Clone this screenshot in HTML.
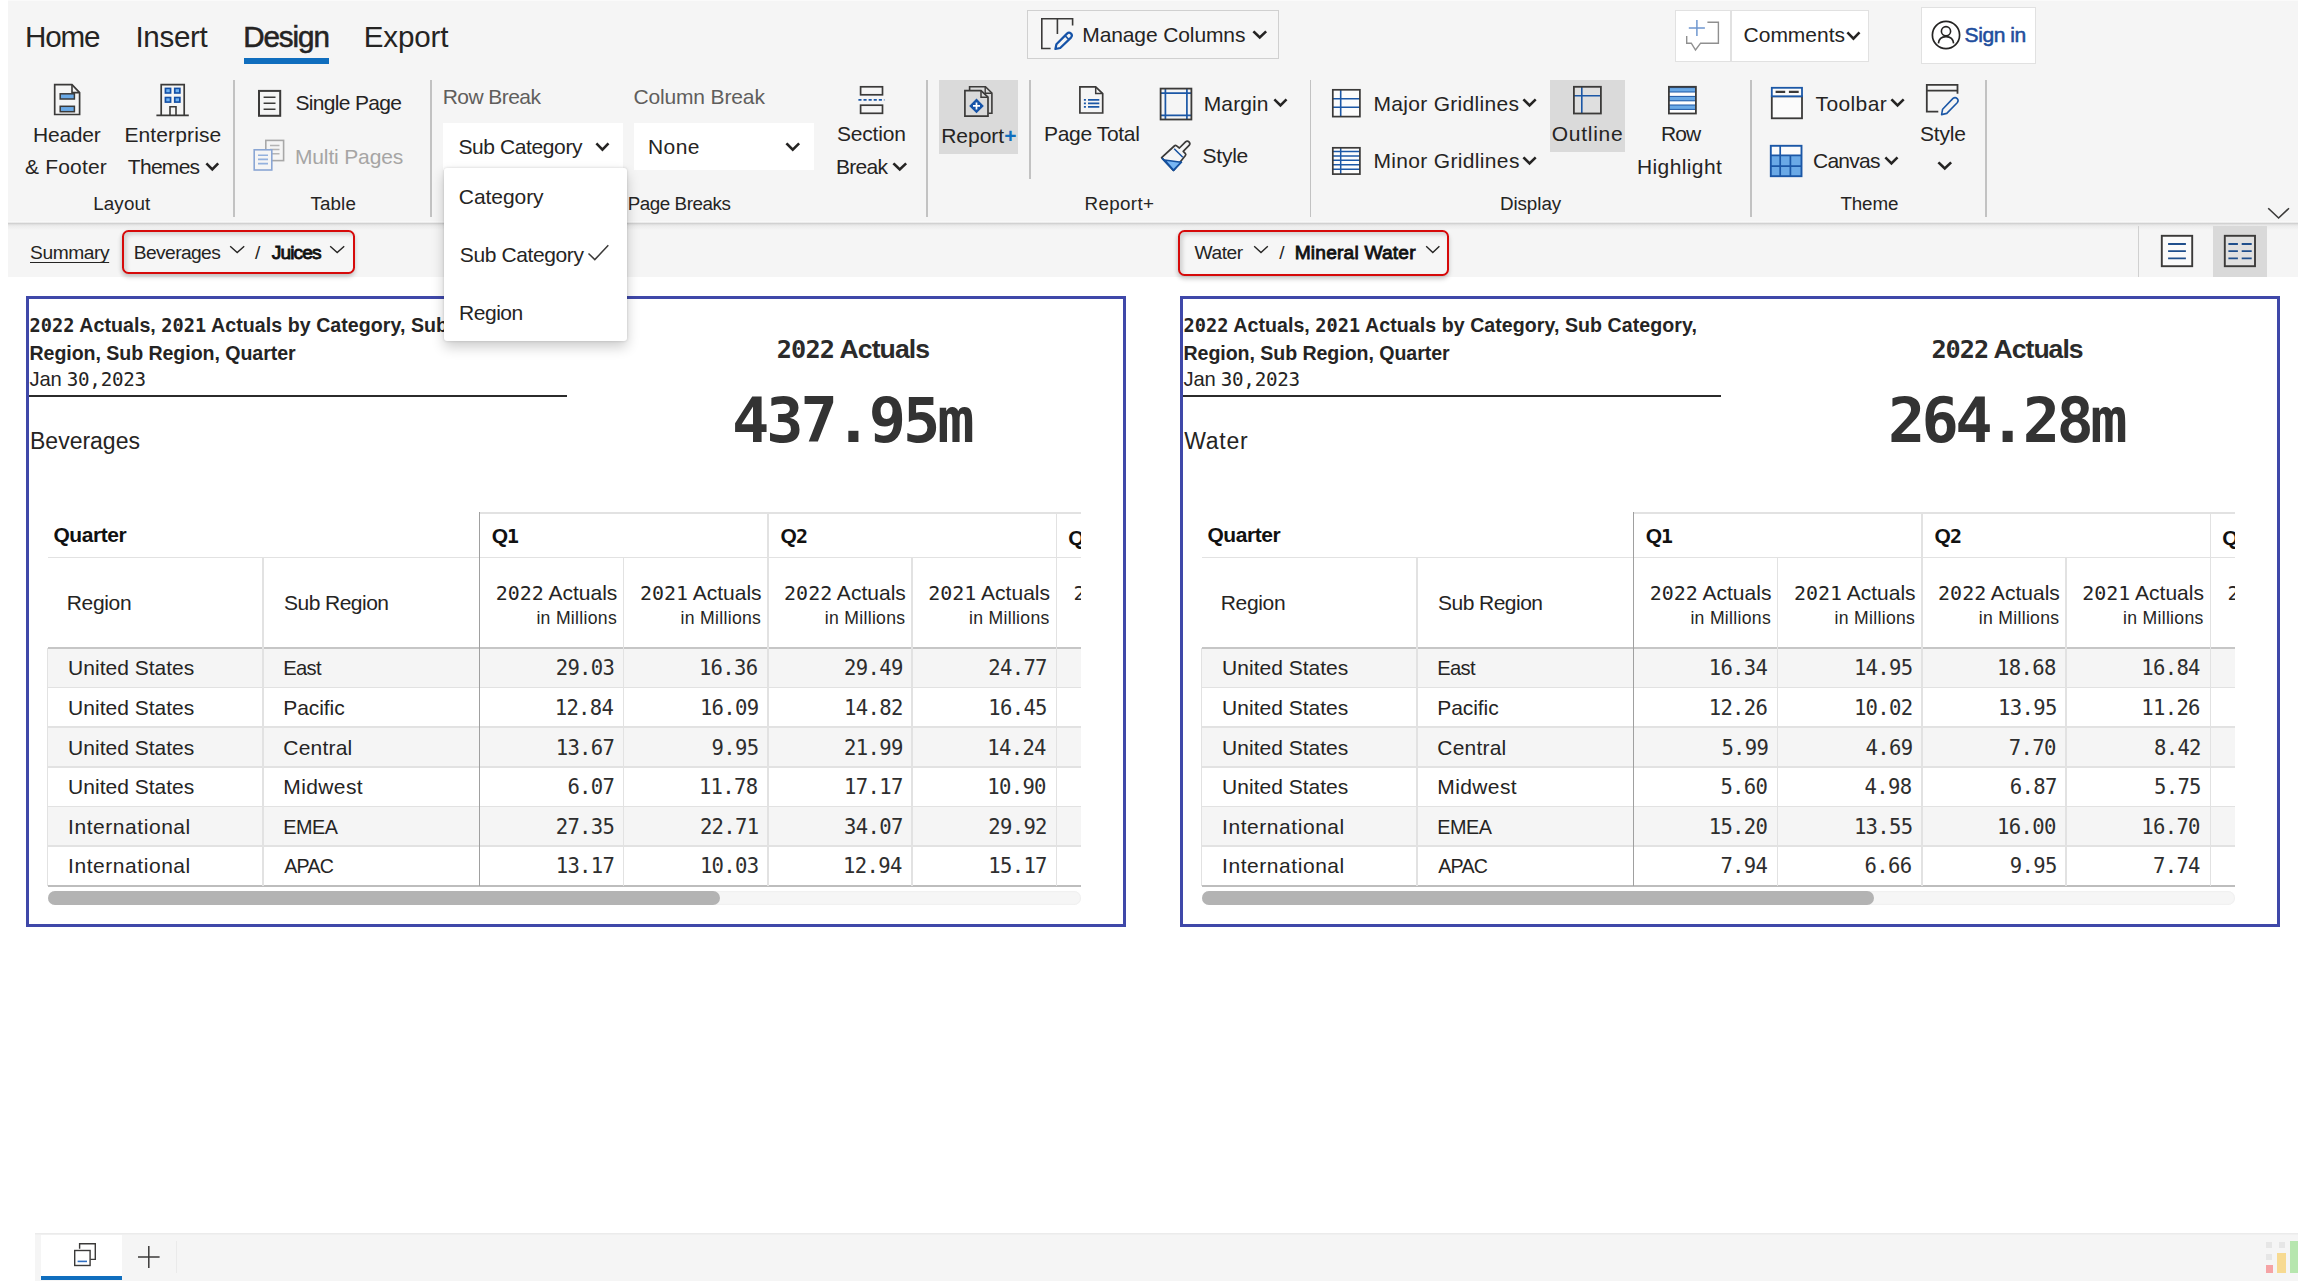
<!DOCTYPE html>
<html lang="en">
<head>
<meta charset="utf-8">
<title>Report</title>
<style>
html,body{margin:0;padding:0;background:#fff;}
body{position:relative;width:2304px;height:1288px;overflow:hidden;font-family:"Liberation Sans",sans-serif;color:#252423;}
body>div,body>svg{position:absolute;}
.t{white-space:nowrap;line-height:1.2;}
.m{font-family:"DejaVu Sans Mono","Liberation Mono",monospace;font-size:.95em;}
.mm{font-family:"DejaVu Sans Mono","Liberation Mono",monospace;}
svg{overflow:visible;}
</style>
</head>
<body>
<div style="left:8px;top:0px;width:2290px;height:277px;background:#f5f5f5;"></div>
<div style="left:8px;top:0px;width:2290px;height:1px;background:#fafafa;"></div>
<div style="left:8px;top:220.8px;width:2290px;height:9px;background:linear-gradient(#f5f5f5 0%,#f9f9f9 8%,#e6e6e6 20%,#cecece 29%,#e2e2e2 40%,#ececec 55%,#f5f5f5 100%);"></div>
<div style="left:233.2px;top:80px;width:1.6px;height:137px;background:#c2c2c2;"></div>
<div style="left:430.2px;top:80px;width:1.6px;height:137px;background:#c2c2c2;"></div>
<div style="left:926.2px;top:80px;width:1.6px;height:137px;background:#c2c2c2;"></div>
<div style="left:1309.7px;top:80px;width:1.6px;height:137px;background:#c2c2c2;"></div>
<div style="left:1750.2px;top:80px;width:1.6px;height:137px;background:#c2c2c2;"></div>
<div style="left:1985.2px;top:80px;width:1.6px;height:137px;background:#c2c2c2;"></div>
<div style="left:1029.2px;top:80px;width:1.6px;height:99px;background:#c2c2c2;"></div>
<div style="left:244px;top:58px;width:85px;height:5.5px;background:#106ebe;"></div>
<svg style="left:205.6px;top:162.5px" width="12.6" height="7.8" viewBox="0 0 12.6 7.8"><path d="M1.3 1.3L6.3 6.5L11.3 1.3" fill="none" stroke="#252423" stroke-width="2.6" stroke-linecap="square" stroke-linejoin="miter"/></svg>
<div style="left:442.6px;top:123px;width:180.4px;height:46.5px;background:#fff;"></div>
<div style="left:633.8px;top:123px;width:180.5px;height:46.5px;background:#fff;"></div>
<svg style="left:595.6px;top:142.7px" width="12.9" height="7.9" viewBox="0 0 12.9 7.9"><path d="M1.3 1.3L6.45 6.6L11.6 1.3" fill="none" stroke="#252423" stroke-width="2.6" stroke-linecap="square" stroke-linejoin="miter"/></svg>
<svg style="left:785.7px;top:142.7px" width="13.5" height="7.9" viewBox="0 0 13.5 7.9"><path d="M1.3 1.3L6.75 6.6L12.2 1.3" fill="none" stroke="#252423" stroke-width="2.6" stroke-linecap="square" stroke-linejoin="miter"/></svg>
<svg style="left:892.9px;top:162.5px" width="13.5" height="7.8" viewBox="0 0 13.5 7.8"><path d="M1.3 1.3L6.75 6.5L12.2 1.3" fill="none" stroke="#252423" stroke-width="2.6" stroke-linecap="square" stroke-linejoin="miter"/></svg>
<div style="left:938.8px;top:80px;width:79.2px;height:73.5px;background:#dadada;"></div>
<svg style="left:1273.5px;top:99.3px" width="12.9" height="7.7" viewBox="0 0 12.9 7.7"><path d="M1.3 1.3L6.45 6.4L11.6 1.3" fill="none" stroke="#252423" stroke-width="2.6" stroke-linecap="square" stroke-linejoin="miter"/></svg>
<svg style="left:1523.4px;top:99.3px" width="13.1" height="7.7" viewBox="0 0 13.1 7.7"><path d="M1.3 1.3L6.55 6.4L11.8 1.3" fill="none" stroke="#252423" stroke-width="2.6" stroke-linecap="square" stroke-linejoin="miter"/></svg>
<svg style="left:1523.4px;top:156.9px" width="13.1" height="7.7" viewBox="0 0 13.1 7.7"><path d="M1.3 1.3L6.55 6.4L11.8 1.3" fill="none" stroke="#252423" stroke-width="2.6" stroke-linecap="square" stroke-linejoin="miter"/></svg>
<div style="left:1549.9px;top:80px;width:75.1px;height:71.7px;background:#dadada;"></div>
<svg style="left:1891.2px;top:99.3px" width="13.1" height="7.7" viewBox="0 0 13.1 7.7"><path d="M1.3 1.3L6.55 6.4L11.8 1.3" fill="none" stroke="#252423" stroke-width="2.6" stroke-linecap="square" stroke-linejoin="miter"/></svg>
<svg style="left:1885.1px;top:156.9px" width="12.9" height="7.7" viewBox="0 0 12.9 7.7"><path d="M1.3 1.3L6.45 6.4L11.6 1.3" fill="none" stroke="#252423" stroke-width="2.6" stroke-linecap="square" stroke-linejoin="miter"/></svg>
<svg style="left:1937.5px;top:162px" width="13.5" height="7.7" viewBox="0 0 13.5 7.7"><path d="M1.3 1.3L6.75 6.4L12.2 1.3" fill="none" stroke="#252423" stroke-width="2.6" stroke-linecap="square" stroke-linejoin="miter"/></svg>
<svg style="left:2267.7px;top:207.7px" width="21.2" height="10.8" viewBox="0 0 21.2 10.8"><path d="M0.8 0.8L10.6 10L20.4 0.8" fill="none" stroke="#3b3a39" stroke-width="1.6" stroke-linecap="square" stroke-linejoin="miter"/></svg>
<div style="left:1027px;top:10.2px;width:251.5px;height:49px;box-sizing:border-box;border:1.4px solid #d0d0d0;background:#f6f6f6;"></div>
<svg style="left:1253.3px;top:30.5px" width="13.5" height="7.8" viewBox="0 0 13.5 7.8"><path d="M1.3 1.3L6.75 6.5L12.2 1.3" fill="none" stroke="#252423" stroke-width="2.6" stroke-linecap="square" stroke-linejoin="miter"/></svg>
<div style="left:1675px;top:9.5px;width:194.3px;height:52px;box-sizing:border-box;border:1.5px solid #e1e1e1;background:#fff;"></div>
<div style="left:1730px;top:10px;width:1.5px;height:51px;background:#e1e1e1;"></div>
<svg style="left:1846.7px;top:31.6px" width="12.9" height="7.9" viewBox="0 0 12.9 7.9"><path d="M1.3 1.3L6.45 6.6L11.6 1.3" fill="none" stroke="#252423" stroke-width="2.6" stroke-linecap="square" stroke-linejoin="miter"/></svg>
<div style="left:1921px;top:7.2px;width:115.3px;height:57.1px;box-sizing:border-box;border:1.5px solid #e1e1e1;background:#fff;"></div>
<div style="left:122.3px;top:229.9px;width:233px;height:44.2px;box-sizing:border-box;border:2.5px solid #d60a0a;border-radius:6.5px;background:#f6f6f6;box-shadow:inset 2.5px 2.5px 4px rgba(0,0,0,.16),0 3px 5px rgba(0,0,0,.16),-1px 2px 4px rgba(0,0,0,.08);"></div>
<svg style="left:229.6px;top:246px" width="14.4" height="7.3" viewBox="0 0 14.4 7.3"><path d="M0.7 0.7L7.2 6.6L13.7 0.7" fill="none" stroke="#252423" stroke-width="1.4" stroke-linecap="square" stroke-linejoin="miter"/></svg>
<svg style="left:330.4px;top:246px" width="14.4" height="7.3" viewBox="0 0 14.4 7.3"><path d="M0.7 0.7L7.2 6.6L13.7 0.7" fill="none" stroke="#252423" stroke-width="1.4" stroke-linecap="square" stroke-linejoin="miter"/></svg>
<div style="left:1178.2px;top:229.9px;width:270.7px;height:46.4px;box-sizing:border-box;border:2.5px solid #d60a0a;border-radius:6.5px;background:#f6f6f6;box-shadow:inset 2.5px 2.5px 4px rgba(0,0,0,.16),0 3px 5px rgba(0,0,0,.16),-1px 2px 4px rgba(0,0,0,.08);"></div>
<svg style="left:1254px;top:246px" width="14" height="7.3" viewBox="0 0 14 7.3"><path d="M0.7 0.7L7 6.6L13.3 0.7" fill="none" stroke="#252423" stroke-width="1.4" stroke-linecap="square" stroke-linejoin="miter"/></svg>
<svg style="left:1426.4px;top:246px" width="13.6" height="7.3" viewBox="0 0 13.6 7.3"><path d="M0.7 0.7L6.8 6.6L12.9 0.7" fill="none" stroke="#252423" stroke-width="1.4" stroke-linecap="square" stroke-linejoin="miter"/></svg>
<div style="left:2137.8px;top:225.7px;width:1.3px;height:51.5px;background:#d0d0d0;"></div>
<div style="left:2213.3px;top:225.7px;width:54.2px;height:51.5px;background:#d9d9d9;"></div>
<div style="left:26px;top:296px;width:1100px;height:630.5px;box-sizing:border-box;border:3.4px solid #3f48a9;background:#fff;"></div>
<div style="left:29.4px;top:394.8px;width:537.6px;height:1.8px;background:#2b2b2b;"></div>
<div style="left:47.5px;top:648px;width:1033.5px;height:39.6px;background:#f5f5f5;"></div>
<div style="left:47.5px;top:727.2px;width:1033.5px;height:39.6px;background:#f5f5f5;"></div>
<div style="left:47.5px;top:806.4px;width:1033.5px;height:39.6px;background:#f5f5f5;"></div>
<div style="left:479.4px;top:512px;width:601.6px;height:1.5px;background:#e2e2e2;"></div>
<div style="left:47.5px;top:556.6px;width:1033.5px;height:1.6px;background:#e2e2e2;"></div>
<div style="left:47.5px;top:646.8px;width:1033.5px;height:2.2px;background:#c6c6c6;"></div>
<div style="left:47.5px;top:686.8px;width:1033.5px;height:1.6px;background:#e2e2e2;"></div>
<div style="left:47.5px;top:726.4px;width:1033.5px;height:1.6px;background:#e2e2e2;"></div>
<div style="left:47.5px;top:766px;width:1033.5px;height:1.6px;background:#e2e2e2;"></div>
<div style="left:47.5px;top:805.6px;width:1033.5px;height:1.6px;background:#e2e2e2;"></div>
<div style="left:47.5px;top:845.2px;width:1033.5px;height:1.6px;background:#e2e2e2;"></div>
<div style="left:47.5px;top:884.6px;width:1033.5px;height:2px;background:#bdbdbd;"></div>
<div style="left:46.9px;top:648px;width:1.4px;height:237.5px;background:#e2e2e2;"></div>
<div style="left:262.3px;top:557px;width:1.5px;height:328.5px;background:#e2e2e2;"></div>
<div style="left:478.5px;top:512px;width:1.8px;height:373.5px;background:#a0a0a0;"></div>
<div style="left:622.9px;top:557px;width:1.5px;height:328.5px;background:#e2e2e2;"></div>
<div style="left:911.3px;top:557px;width:1.5px;height:328.5px;background:#e2e2e2;"></div>
<div style="left:767.1px;top:512px;width:1.5px;height:373.5px;background:#e2e2e2;"></div>
<div style="left:1055.5px;top:512px;width:1.5px;height:373.5px;background:#e2e2e2;"></div>
<div style="left:1060px;top:515px;width:21px;height:130px;overflow:hidden;"><div class="t" style="position:absolute;left:8.3px;top:9.5px;font-size:21px;font-weight:bold;color:#111;">Q<span class="m">3</span></div><div class="t mm" style="position:absolute;left:13.5px;top:65.6px;font-size:20px;letter-spacing:-0.7px;">2022</div></div>
<div style="left:47.5px;top:890.5px;width:1033.5px;height:14.3px;background:#f6f6f6;border-radius:7px;box-shadow:inset 0 0 2px rgba(0,0,0,.08);"></div>
<div style="left:47.5px;top:890.5px;width:672.5px;height:14.3px;background:#b3b3b3;border-radius:7px;"></div>
<div style="left:1180px;top:296px;width:1100px;height:630.5px;box-sizing:border-box;border:3.4px solid #3f48a9;background:#fff;"></div>
<div style="left:1183.4px;top:394.8px;width:537.6px;height:1.8px;background:#2b2b2b;"></div>
<div style="left:1201.5px;top:648px;width:1033.5px;height:39.6px;background:#f5f5f5;"></div>
<div style="left:1201.5px;top:727.2px;width:1033.5px;height:39.6px;background:#f5f5f5;"></div>
<div style="left:1201.5px;top:806.4px;width:1033.5px;height:39.6px;background:#f5f5f5;"></div>
<div style="left:1633.4px;top:512px;width:601.6px;height:1.5px;background:#e2e2e2;"></div>
<div style="left:1201.5px;top:556.6px;width:1033.5px;height:1.6px;background:#e2e2e2;"></div>
<div style="left:1201.5px;top:646.8px;width:1033.5px;height:2.2px;background:#c6c6c6;"></div>
<div style="left:1201.5px;top:686.8px;width:1033.5px;height:1.6px;background:#e2e2e2;"></div>
<div style="left:1201.5px;top:726.4px;width:1033.5px;height:1.6px;background:#e2e2e2;"></div>
<div style="left:1201.5px;top:766px;width:1033.5px;height:1.6px;background:#e2e2e2;"></div>
<div style="left:1201.5px;top:805.6px;width:1033.5px;height:1.6px;background:#e2e2e2;"></div>
<div style="left:1201.5px;top:845.2px;width:1033.5px;height:1.6px;background:#e2e2e2;"></div>
<div style="left:1201.5px;top:884.6px;width:1033.5px;height:2px;background:#bdbdbd;"></div>
<div style="left:1200.9px;top:648px;width:1.4px;height:237.5px;background:#e2e2e2;"></div>
<div style="left:1416.3px;top:557px;width:1.5px;height:328.5px;background:#e2e2e2;"></div>
<div style="left:1632.5px;top:512px;width:1.8px;height:373.5px;background:#a0a0a0;"></div>
<div style="left:1776.9px;top:557px;width:1.5px;height:328.5px;background:#e2e2e2;"></div>
<div style="left:2065.3px;top:557px;width:1.5px;height:328.5px;background:#e2e2e2;"></div>
<div style="left:1921.1px;top:512px;width:1.5px;height:373.5px;background:#e2e2e2;"></div>
<div style="left:2209.5px;top:512px;width:1.5px;height:373.5px;background:#e2e2e2;"></div>
<div style="left:2214px;top:515px;width:21px;height:130px;overflow:hidden;"><div class="t" style="position:absolute;left:8.3px;top:9.5px;font-size:21px;font-weight:bold;color:#111;">Q<span class="m">3</span></div><div class="t mm" style="position:absolute;left:13.5px;top:65.6px;font-size:20px;letter-spacing:-0.7px;">2022</div></div>
<div style="left:1201.5px;top:890.5px;width:1033.5px;height:14.3px;background:#f6f6f6;border-radius:7px;box-shadow:inset 0 0 2px rgba(0,0,0,.08);"></div>
<div style="left:1201.5px;top:890.5px;width:672.5px;height:14.3px;background:#b3b3b3;border-radius:7px;"></div>
<div style="left:34.7px;top:1233.3px;width:2263.3px;height:47.4px;background:#f5f5f5;box-shadow:inset 0 1.5px 0 #ebebeb;"></div>
<div style="left:40.8px;top:1234.7px;width:81.6px;height:41.7px;background:#fff;"></div>
<div style="left:40.8px;top:1276.4px;width:81.6px;height:3.6px;background:#106ebe;"></div>
<div style="left:175.8px;top:1241px;width:1px;height:32px;background:#eaeaea;"></div>
<svg style="left:138.4px;top:1245.7px" width="21.6" height="22" viewBox="0 0 21.6 22"><path d="M10.8 0V22M0 11H21.6" stroke="#3b3a39" stroke-width="1.5" fill="none"/></svg>
<svg style="left:73.8px;top:1242.5px" width="22" height="23.2" viewBox="0 0 22 23.2"><path d="M5.6 5.8V0.7H21.3V16.4H16.2" fill="none" stroke="#3b3a39" stroke-width="1.4"/><rect x="0.7" y="7.5" width="15.4" height="15" fill="#fff" stroke="#3b3a39" stroke-width="1.4"/><path d="M3.6 18.4H13" stroke="#2f6fc2" stroke-width="1.6"/></svg>
<div style="left:2265.5px;top:1265.3px;width:7.8px;height:7.6px;background:#f5a3a5;"></div>
<div style="left:2277.4px;top:1253.1px;width:8.2px;height:19.8px;background:#f7da91;"></div>
<div style="left:2289.8px;top:1241px;width:8.2px;height:31.9px;background:#b6e6ae;"></div>
<div style="left:2266.3px;top:1242px;width:6.1px;height:6px;background:#e6e6e6;"></div>
<div style="left:2278.5px;top:1242px;width:6.1px;height:6px;background:#e6e6e6;"></div>
<div style="left:2266.3px;top:1254px;width:6.1px;height:6px;background:#e6e6e6;"></div>
<svg style="left:52.6px;top:83.2px" width="29" height="34" viewBox="0 0 29 34"><path d="M1.7 1.7H19L26.6 9.6V31.5H1.7Z" fill="#f5f5f5" stroke="#3b3a39" stroke-width="1.7"/><path d="M19 1.7V9.6H26.6" fill="none" stroke="#3b3a39" stroke-width="1.6"/><rect x="7.2" y="10.8" width="14.2" height="5.2" fill="#6aa9e6" stroke="#3b3a39" stroke-width="1.5"/><rect x="7.2" y="23.3" width="14.2" height="5.4" fill="#6aa9e6" stroke="#3b3a39" stroke-width="1.5"/></svg>
<svg style="left:156.4px;top:83.2px" width="34" height="34" viewBox="0 0 34 34"><path d="M5.2 32.3V1.7H28.2V32.3" fill="#f5f5f5" stroke="#3b3a39" stroke-width="1.7"/><path d="M0.4 32.3H32.8" stroke="#3b3a39" stroke-width="1.7"/><path d="M14 32.3V23.8H20V32.3" fill="none" stroke="#3b3a39" stroke-width="1.6"/><rect x="8.6" y="4.6" width="6.8" height="6.2" fill="#134fa5"/><rect x="10.299999999999999" y="6.199999999999999" width="3.4" height="3" fill="#6fb2f2"/><rect x="17.9" y="4.6" width="6.8" height="6.2" fill="#134fa5"/><rect x="19.599999999999998" y="6.199999999999999" width="3.4" height="3" fill="#6fb2f2"/><rect x="8.6" y="13.7" width="6.8" height="6.2" fill="#134fa5"/><rect x="10.299999999999999" y="15.299999999999999" width="3.4" height="3" fill="#6fb2f2"/><rect x="17.9" y="13.7" width="6.8" height="6.2" fill="#134fa5"/><rect x="19.599999999999998" y="15.299999999999999" width="3.4" height="3" fill="#6fb2f2"/></svg>
<svg style="left:257.4px;top:89.2px" width="26" height="29" viewBox="0 0 26 29"><rect x="2" y="1.9" width="21.2" height="24.9" fill="#f5f5f5" stroke="#3b3a39" stroke-width="2"/><path d="M6.6 8.2H18.5M6.6 14.2H18.5M6.6 20.3H18.5" stroke="#3b3a39" stroke-width="1.6"/></svg>
<svg style="left:253px;top:139.4px" width="33" height="33" viewBox="0 0 33 33"><rect x="12.8" y="1.4" width="17.8" height="20.2" fill="#f5f5f5" stroke="#a8a8a8" stroke-width="1.6"/><path d="M17 6.5H26.5M17 10.6H26.5M17 14.8H26.5" stroke="#b4b4b4" stroke-width="1.5"/><rect x="1.2" y="10.8" width="17.6" height="20.2" fill="#f5f5f5" stroke="#8aa6d4" stroke-width="1.6"/><path d="M5 16.2H15M5 20.4H15M5 24.6H15" stroke="#93b1de" stroke-width="1.6"/></svg>
<svg style="left:857.6px;top:85px" width="27" height="30" viewBox="0 0 27 30"><rect x="2.6" y="1.8" width="21.9" height="8" fill="#f5f5f5" stroke="#3b3a39" stroke-width="1.7"/><path d="M0.4 14.9H26.4" stroke="#1b57a6" stroke-width="1.6" stroke-dasharray="3.1 2"/><rect x="2.6" y="20.2" width="21.9" height="8.1" fill="#f5f5f5" stroke="#3b3a39" stroke-width="1.7"/></svg>
<svg style="left:963px;top:85px" width="31" height="33" viewBox="0 0 31 33"><path d="M6.6 5.2V1.7H22.5L28.9 8V28.2H25.4" fill="none" stroke="#3b3a39" stroke-width="1.6"/><path d="M22.2 1.9V8.3H28.8" fill="none" stroke="#3b3a39" stroke-width="1.4"/><path d="M1.9 5.6H18L25 12.2V31.1H1.9Z" fill="#dadada" stroke="#3b3a39" stroke-width="1.7"/><path d="M18 5.8V12.2H24.8" fill="none" stroke="#3b3a39" stroke-width="1.5"/><path d="M13.5 13.6L20.8 20.9L13.5 28.2L6.2 20.9Z" fill="#1553a8"/><path d="M13.5 17.4V24.4M10 20.9H17" stroke="#fff" stroke-width="1.7"/></svg>
<svg style="left:1078.4px;top:85px" width="27" height="30" viewBox="0 0 27 30"><path d="M1.9 1.8H17.7L24.7 8.6V28H1.9Z" fill="#f5f5f5" stroke="#3b3a39" stroke-width="1.7"/><path d="M17.7 1.9V8.6H24.6" fill="none" stroke="#3b3a39" stroke-width="1.5"/><path d="M10 14.9H21.3M10 18.4H21.3M10 21.8H21.3" stroke="#1b57a6" stroke-width="1.7"/><path d="M5.9 14.9H7.9M5.9 18.4H7.9M5.9 21.8H7.9" stroke="#1b57a6" stroke-width="1.7"/></svg>
<svg style="left:1159.4px;top:86.5px" width="34" height="34" viewBox="0 0 34 34"><path d="M6.4 1.6V32.7M27.9 1.6V32.7M1.6 6.2H32.4M1.6 28.4H32.4" stroke="#1b57a6" stroke-width="1.7" fill="none"/><rect x="1.6" y="1.6" width="30.8" height="30.9" fill="none" stroke="#3b3a39" stroke-width="1.8"/></svg>
<svg style="left:1160px;top:140px" width="33" height="32" viewBox="0 0 33 32"><path d="M1.6 17.7L14.3 6Q15.4 5 16.6 5.9L19.4 8L25.5 1.8A2.55 2.55 0 0 1 29.1 5.4L23.2 11.4L25.2 13.3Q26.3 14.3 25.4 15.5L13.5 30.4Z" fill="#f5f5f5" stroke="#3b3a39" stroke-width="1.7" stroke-linejoin="round"/><path d="M2 18.2L13.5 30.3L21.8 21.6" fill="none" stroke="#14509f" stroke-width="1.8" stroke-linejoin="round"/><path d="M4.6 20L21 22.3L13.5 30Z" fill="#78b6f4" stroke="#14509f" stroke-width="1.5" stroke-linejoin="round"/><path d="M14.2 8.8L22.8 17.3" stroke="#14509f" stroke-width="1.5"/></svg>
<svg style="left:1331.2px;top:88.4px" width="31" height="31" viewBox="0 0 31 31"><rect x="1.8" y="1.8" width="27.1" height="26.8" fill="#fcfcfc"/><path d="M9.7 1.8V28.6M1.8 10.7H28.9M1.8 19.2H28.9" stroke="#1b57a6" stroke-width="1.6"/><rect x="1.8" y="1.8" width="27.1" height="26.8" fill="none" stroke="#3b3a39" stroke-width="1.7"/></svg>
<svg style="left:1331.2px;top:146.4px" width="31" height="31" viewBox="0 0 31 31"><rect x="1.8" y="1.8" width="27.1" height="26.3" fill="#fcfcfc"/><path d="M9.7 1.8V28M1.8 5.4H28.9M1.8 9.9H28.9M1.8 14.3H28.9M1.8 18.8H28.9M1.8 23.3H28.9" stroke="#1b57a6" stroke-width="1.5"/><rect x="1.8" y="1.8" width="27.1" height="26.3" fill="none" stroke="#3b3a39" stroke-width="1.7"/></svg>
<svg style="left:1572px;top:84.7px" width="31" height="31" viewBox="0 0 31 31"><rect x="1.9" y="1.8" width="27" height="26.7" fill="#dfdfdf"/><path d="M9.8 1.8V28.5M1.9 10.7H28.9" stroke="#1b57a6" stroke-width="1.6"/><rect x="1.9" y="1.8" width="27" height="26.7" fill="none" stroke="#3b3a39" stroke-width="1.8"/></svg>
<svg style="left:1666.5px;top:84.7px" width="31" height="31" viewBox="0 0 31 31"><rect x="1.9" y="1.8" width="27" height="26.7" fill="#fff"/><rect x="1.9" y="2.6" width="27" height="4.4" fill="#6aa9e6"/><path d="M1.9 2.6H28.9M1.9 7.0H28.9" stroke="#1b57a6" stroke-width="1"/><rect x="1.9" y="11.4" width="27" height="4.4" fill="#6aa9e6"/><path d="M1.9 11.4H28.9M1.9 15.8H28.9" stroke="#1b57a6" stroke-width="1"/><rect x="1.9" y="20" width="27" height="4.4" fill="#6aa9e6"/><path d="M1.9 20H28.9M1.9 24.4H28.9" stroke="#1b57a6" stroke-width="1"/><rect x="1.9" y="1.8" width="27" height="26.7" fill="none" stroke="#3b3a39" stroke-width="1.8"/></svg>
<svg style="left:1770.2px;top:86.2px" width="34" height="35" viewBox="0 0 34 35"><rect x="1.8" y="10.3" width="30.2" height="22" fill="#fbfbfb" stroke="#3b3a39" stroke-width="1.8"/><rect x="1.8" y="1.8" width="30.2" height="8.5" fill="#fbfbfb" stroke="#1b57a6" stroke-width="1.8"/><path d="M5.6 5.9H15.2M18.9 5.9H28.7" stroke="#3b3a39" stroke-width="2.4"/></svg>
<svg style="left:1769.3px;top:144.2px" width="35" height="35" viewBox="0 0 35 35"><rect x="1.8" y="1.8" width="30.7" height="30.4" fill="#fbfbfb"/><rect x="1.8" y="11.4" width="30.7" height="20.8" fill="#6aa9e6"/><path d="M11.2 1.8V32.2M21.4 11.4V32.2M1.8 11.4H32.5M1.8 22.1H32.5" stroke="#1b57a6" stroke-width="1.7"/><rect x="1.8" y="1.8" width="30.7" height="30.4" fill="none" stroke="#1b57a6" stroke-width="1.9"/></svg>
<svg style="left:1925px;top:83.2px" width="35" height="33" viewBox="0 0 35 33"><path d="M13.3 28.7H1.8V1.8H32.5V10.8M1.8 7.6H32.5" fill="none" stroke="#3b3a39" stroke-width="1.8"/><path d="M16.6 31.6L17.6 26.2L28 15.4Q30.2 13.6 32.2 15.6Q34 17.8 32.2 19.8L21.8 30.4Z" fill="#f5f5f5" stroke="#1b57a6" stroke-width="1.6" stroke-linejoin="round"/></svg>
<svg style="left:1040.4px;top:17.4px" width="35" height="34" viewBox="0 0 35 34"><path d="M10.6 31.5H1.8V1.8H32.6V8.6M17.4 1.8V17" fill="none" stroke="#3b3a39" stroke-width="1.6"/><path d="M15.4 32L16.4 27.2L27 16.6Q29 14.8 31 16.6Q32.8 18.6 31 20.6L20.2 31Z" fill="#f5f5f5" stroke="#1553a8" stroke-width="2.2" stroke-linejoin="round"/><path d="M25 18.6L29 22.6" stroke="#1b57a6" stroke-width="1.6"/></svg>
<svg style="left:1685px;top:18px" width="36" height="34" viewBox="0 0 36 34"><path d="M22.4 4.3H33.4V25.2H15.6L10.5 32L6.3 25.2H1.7V17.9" fill="none" stroke="#8f8f8f" stroke-width="1.4"/><path d="M11.9 2V17.9M3.8 9.9H19.9" stroke="#6f97cf" stroke-width="1.5"/></svg>
<svg style="left:1930.5px;top:19.5px" width="30" height="30" viewBox="0 0 30 30"><circle cx="15" cy="15" r="13.6" fill="none" stroke="#252423" stroke-width="1.7"/><circle cx="15" cy="11.2" r="4.6" fill="none" stroke="#252423" stroke-width="1.6"/><path d="M7.4 23.4Q8 16.6 15 16.6Q22 16.6 22.6 23.4" fill="none" stroke="#252423" stroke-width="1.6"/></svg>
<svg style="left:2160.2px;top:234.2px" width="35" height="35" viewBox="0 0 35 35"><rect x="1.8" y="1.8" width="30.4" height="30.4" fill="#fafafa" stroke="#3b3a39" stroke-width="1.9"/><path d="M8.1 10H25.9M8.1 17.1H25.9M8.1 24.3H25.9" stroke="#204f8c" stroke-width="1.8"/></svg>
<svg style="left:2223.1px;top:234.2px" width="35" height="35" viewBox="0 0 35 35"><rect x="1.8" y="1.8" width="30.2" height="30.4" fill="#e0e0e0" stroke="#3b3a39" stroke-width="1.9"/><path d="M5.4 10H14.9M18.7 10H28.7M5.4 17.1H14.9M18.7 17.1H28.7M5.4 24.3H14.9M18.7 24.3H28.7" stroke="#204f8c" stroke-width="1.8"/></svg>
<div class="t" style="left:25.00px;top:19.00px;font-size:29.6px;letter-spacing:-1.165px;">Home</div>
<div class="t" style="left:135.40px;top:19.00px;font-size:29.6px;letter-spacing:-0.319px;">Insert</div>
<div class="t" style="left:243.20px;top:19.00px;font-size:29.6px;letter-spacing:-1.093px;-webkit-text-stroke:0.55px currentColor;">Design</div>
<div class="t" style="left:363.70px;top:19.00px;font-size:29.6px;letter-spacing:-0.162px;">Export</div>
<div class="t" style="left:33.00px;top:121.50px;font-size:21px;letter-spacing:-0.219px;">Header</div>
<div class="t" style="left:25.00px;top:153.80px;font-size:21px;letter-spacing:0.178px;">&amp; Footer</div>
<div class="t" style="left:124.40px;top:121.50px;font-size:21px;letter-spacing:0.129px;">Enterprise</div>
<div class="t" style="left:127.80px;top:153.80px;font-size:21px;letter-spacing:-0.712px;">Themes</div>
<div class="t" style="left:93.20px;top:193.00px;font-size:18.8px;letter-spacing:0.145px;">Layout</div>
<div class="t" style="left:295.50px;top:90.00px;font-size:21px;letter-spacing:-0.679px;">Single Page</div>
<div class="t" style="left:295.00px;top:144.00px;font-size:21px;letter-spacing:-0.152px;color:#a6a5a4;">Multi Pages</div>
<div class="t" style="left:310.40px;top:193.00px;font-size:18.8px;letter-spacing:0.135px;">Table</div>
<div class="t" style="left:442.70px;top:84.00px;font-size:21px;letter-spacing:-0.563px;color:#605e5c;">Row Break</div>
<div class="t" style="left:633.40px;top:84.00px;font-size:21px;letter-spacing:-0.142px;color:#605e5c;">Column Break</div>
<div class="t" style="left:458.40px;top:134.00px;font-size:21px;letter-spacing:-0.393px;">Sub Category</div>
<div class="t" style="left:648.00px;top:134.00px;font-size:21px;letter-spacing:0.425px;">None</div>
<div class="t" style="left:627.80px;top:193.00px;font-size:18.8px;letter-spacing:-0.456px;">Page Breaks</div>
<div class="t" style="left:836.90px;top:121.10px;font-size:21px;letter-spacing:-0.161px;">Section</div>
<div class="t" style="left:835.90px;top:153.80px;font-size:21px;letter-spacing:-0.715px;">Break</div>
<div class="t" style="left:941.20px;top:122.60px;font-size:21px;letter-spacing:-0.006px;">Report<span style="color:#106ebe;font-weight:bold">+</span></div>
<div class="t" style="left:1044.10px;top:121.00px;font-size:21px;letter-spacing:-0.344px;">Page Total</div>
<div class="t" style="left:1203.70px;top:90.60px;font-size:21px;letter-spacing:0.135px;">Margin</div>
<div class="t" style="left:1202.50px;top:143.00px;font-size:21px;letter-spacing:-0.227px;">Style</div>
<div class="t" style="left:1084.50px;top:193.00px;font-size:18.8px;letter-spacing:0.354px;">Report+</div>
<div class="t" style="left:1373.50px;top:90.60px;font-size:21px;letter-spacing:0.306px;">Major Gridlines</div>
<div class="t" style="left:1373.50px;top:148.20px;font-size:21px;letter-spacing:0.334px;">Minor Gridlines</div>
<div class="t" style="left:1551.80px;top:121.00px;font-size:21px;letter-spacing:0.722px;">Outline</div>
<div class="t" style="left:1660.90px;top:121.00px;font-size:21px;letter-spacing:-0.875px;">Row</div>
<div class="t" style="left:1637.00px;top:153.80px;font-size:21px;letter-spacing:0.389px;">Highlight</div>
<div class="t" style="left:1499.90px;top:193.00px;font-size:18.8px;letter-spacing:-0.051px;">Display</div>
<div class="t" style="left:1815.60px;top:90.60px;font-size:21px;letter-spacing:0.367px;">Toolbar</div>
<div class="t" style="left:1813.00px;top:148.20px;font-size:21px;letter-spacing:-0.761px;">Canvas</div>
<div class="t" style="left:1920.10px;top:121.00px;font-size:21px;letter-spacing:-0.227px;">Style</div>
<div class="t" style="left:1840.40px;top:193.00px;font-size:18.8px;letter-spacing:-0.102px;">Theme</div>
<div class="t" style="left:1082.30px;top:22.30px;font-size:21px;letter-spacing:-0.115px;">Manage Columns</div>
<div class="t" style="left:1743.60px;top:22.20px;font-size:21px;letter-spacing:-0.019px;">Comments</div>
<div class="t" style="left:1964.60px;top:22.40px;font-size:21px;letter-spacing:-0.440px;color:#1f4e9d;-webkit-text-stroke:0.55px currentColor;">Sign in</div>
<div class="t" style="left:30.00px;top:240.60px;font-size:19.2px;letter-spacing:-0.417px;text-decoration:underline;text-underline-offset:3px;text-decoration-thickness:1.2px;text-decoration-skip-ink:none;">Summary</div>
<div class="t" style="left:133.80px;top:240.60px;font-size:19.2px;letter-spacing:-0.593px;">Beverages</div>
<div class="t" style="left:255.00px;top:240.60px;font-size:19.2px;">/</div>
<div class="t" style="left:271.80px;top:240.70px;font-size:19.2px;letter-spacing:-0.939px;color:#111;-webkit-text-stroke:0.85px currentColor;">Juices</div>
<div class="t" style="left:1194.60px;top:240.60px;font-size:19.2px;letter-spacing:-0.470px;">Water</div>
<div class="t" style="left:1279.20px;top:240.60px;font-size:19.2px;">/</div>
<div class="t" style="left:1294.70px;top:240.70px;font-size:19.2px;letter-spacing:0.181px;color:#111;-webkit-text-stroke:0.85px currentColor;">Mineral Water</div>
<div class="t" style="left:29.50px;top:314.40px;font-size:19.6px;letter-spacing:0.046px;font-weight:bold;"><span class="m">2022</span> Actuals, <span class="m">2021</span> Actuals by Category, Sub Category,</div>
<div class="t" style="left:29.50px;top:342.10px;font-size:19.6px;letter-spacing:-0.065px;font-weight:bold;">Region, Sub Region, Quarter</div>
<div class="t" style="left:29.60px;top:367.00px;font-size:20.2px;letter-spacing:-0.250px;">Jan <span class="m">30,2023</span></div>
<div class="t" style="left:30.00px;top:427.80px;font-size:23px;">Beverages</div>
<div class="t" style="left:776.80px;top:333.80px;font-size:26.6px;letter-spacing:-0.913px;font-weight:bold;color:#2b2b2b;"><span class="m">2022</span> Actuals</div>
<div class="t" style="left:732.10px;top:383.80px;font-size:62px;letter-spacing:-3.145px;font-weight:bold;color:#333;"><span class="mm">437.95m</span></div>
<div class="t" style="left:53.50px;top:521.80px;font-size:21px;letter-spacing:-0.465px;font-weight:bold;color:#111;">Quarter</div>
<div class="t" style="left:491.70px;top:522.70px;font-size:21px;letter-spacing:-1.056px;font-weight:bold;color:#111;">Q<span class="m">1</span></div>
<div class="t" style="left:780.40px;top:522.70px;font-size:21px;letter-spacing:-0.756px;font-weight:bold;color:#111;">Q<span class="m">2</span></div>
<div class="t" style="left:66.70px;top:590.00px;font-size:21px;letter-spacing:-0.317px;">Region</div>
<div class="t" style="left:284.00px;top:590.00px;font-size:21px;letter-spacing:-0.530px;">Sub Region</div>
<div class="t" style="left:495.70px;top:579.50px;font-size:21px;letter-spacing:0.012px;"><span class="m">2022</span> Actuals</div>
<div class="t" style="left:536.40px;top:607.50px;font-size:17.6px;letter-spacing:0.305px;">in Millions</div>
<div class="t" style="left:639.90px;top:579.50px;font-size:21px;letter-spacing:0.012px;"><span class="m">2021</span> Actuals</div>
<div class="t" style="left:680.60px;top:607.50px;font-size:17.6px;letter-spacing:0.305px;">in Millions</div>
<div class="t" style="left:784.10px;top:579.50px;font-size:21px;letter-spacing:0.013px;"><span class="m">2022</span> Actuals</div>
<div class="t" style="left:824.80px;top:607.50px;font-size:17.6px;letter-spacing:0.305px;">in Millions</div>
<div class="t" style="left:928.30px;top:579.50px;font-size:21px;letter-spacing:0.013px;"><span class="m">2021</span> Actuals</div>
<div class="t" style="left:969.00px;top:607.50px;font-size:17.6px;letter-spacing:0.305px;">in Millions</div>
<div class="t" style="left:68.10px;top:655.30px;font-size:21px;letter-spacing:0.010px;">United States</div>
<div class="t" style="left:283.30px;top:656.30px;font-size:20.2px;letter-spacing:-0.699px;">East</div>
<div class="t" style="left:555.70px;top:656.30px;font-size:20.6px;letter-spacing:-0.700px;color:#2e2e2e;"><span class="mm">29.03</span></div>
<div class="t" style="left:698.90px;top:656.30px;font-size:20.6px;letter-spacing:-0.700px;color:#2e2e2e;"><span class="mm">16.36</span></div>
<div class="t" style="left:844.10px;top:656.30px;font-size:20.6px;letter-spacing:-0.700px;color:#2e2e2e;"><span class="mm">29.49</span></div>
<div class="t" style="left:988.30px;top:656.30px;font-size:20.6px;letter-spacing:-0.700px;color:#2e2e2e;"><span class="mm">24.77</span></div>
<div class="t" style="left:68.10px;top:694.90px;font-size:21px;letter-spacing:0.010px;">United States</div>
<div class="t" style="left:283.30px;top:694.90px;font-size:21px;letter-spacing:-0.077px;">Pacific</div>
<div class="t" style="left:554.70px;top:695.90px;font-size:20.6px;letter-spacing:-0.700px;color:#2e2e2e;"><span class="mm">12.84</span></div>
<div class="t" style="left:699.90px;top:695.90px;font-size:20.6px;letter-spacing:-0.700px;color:#2e2e2e;"><span class="mm">16.09</span></div>
<div class="t" style="left:844.10px;top:695.90px;font-size:20.6px;letter-spacing:-0.700px;color:#2e2e2e;"><span class="mm">14.82</span></div>
<div class="t" style="left:988.30px;top:695.90px;font-size:20.6px;letter-spacing:-0.700px;color:#2e2e2e;"><span class="mm">16.45</span></div>
<div class="t" style="left:68.10px;top:734.50px;font-size:21px;letter-spacing:0.010px;">United States</div>
<div class="t" style="left:283.30px;top:734.50px;font-size:21px;letter-spacing:0.210px;">Central</div>
<div class="t" style="left:555.70px;top:735.50px;font-size:20.6px;letter-spacing:-0.700px;color:#2e2e2e;"><span class="mm">13.67</span></div>
<div class="t" style="left:711.59px;top:735.50px;font-size:20.6px;letter-spacing:-0.700px;color:#2e2e2e;"><span class="mm">9.95</span></div>
<div class="t" style="left:844.10px;top:735.50px;font-size:20.6px;letter-spacing:-0.700px;color:#2e2e2e;"><span class="mm">21.99</span></div>
<div class="t" style="left:987.30px;top:735.50px;font-size:20.6px;letter-spacing:-0.700px;color:#2e2e2e;"><span class="mm">14.24</span></div>
<div class="t" style="left:68.10px;top:774.10px;font-size:21px;letter-spacing:0.010px;">United States</div>
<div class="t" style="left:283.30px;top:774.10px;font-size:21px;letter-spacing:0.384px;">Midwest</div>
<div class="t" style="left:567.39px;top:775.10px;font-size:20.6px;letter-spacing:-0.700px;color:#2e2e2e;"><span class="mm">6.07</span></div>
<div class="t" style="left:698.90px;top:775.10px;font-size:20.6px;letter-spacing:-0.700px;color:#2e2e2e;"><span class="mm">11.78</span></div>
<div class="t" style="left:844.10px;top:775.10px;font-size:20.6px;letter-spacing:-0.700px;color:#2e2e2e;"><span class="mm">17.17</span></div>
<div class="t" style="left:987.30px;top:775.10px;font-size:20.6px;letter-spacing:-0.700px;color:#2e2e2e;"><span class="mm">10.90</span></div>
<div class="t" style="left:68.10px;top:813.70px;font-size:21px;letter-spacing:0.548px;">International</div>
<div class="t" style="left:283.30px;top:815.70px;font-size:19.8px;letter-spacing:-0.456px;">EMEA</div>
<div class="t" style="left:555.70px;top:814.70px;font-size:20.6px;letter-spacing:-0.700px;color:#2e2e2e;"><span class="mm">27.35</span></div>
<div class="t" style="left:699.90px;top:814.70px;font-size:20.6px;letter-spacing:-0.700px;color:#2e2e2e;"><span class="mm">22.71</span></div>
<div class="t" style="left:844.10px;top:814.70px;font-size:20.6px;letter-spacing:-0.700px;color:#2e2e2e;"><span class="mm">34.07</span></div>
<div class="t" style="left:988.30px;top:814.70px;font-size:20.6px;letter-spacing:-0.700px;color:#2e2e2e;"><span class="mm">29.92</span></div>
<div class="t" style="left:68.10px;top:853.30px;font-size:21px;letter-spacing:0.548px;">International</div>
<div class="t" style="left:284.30px;top:855.30px;font-size:19.6px;letter-spacing:-0.752px;">APAC</div>
<div class="t" style="left:555.70px;top:854.30px;font-size:20.6px;letter-spacing:-0.700px;color:#2e2e2e;"><span class="mm">13.17</span></div>
<div class="t" style="left:699.90px;top:854.30px;font-size:20.6px;letter-spacing:-0.700px;color:#2e2e2e;"><span class="mm">10.03</span></div>
<div class="t" style="left:843.10px;top:854.30px;font-size:20.6px;letter-spacing:-0.700px;color:#2e2e2e;"><span class="mm">12.94</span></div>
<div class="t" style="left:988.30px;top:854.30px;font-size:20.6px;letter-spacing:-0.700px;color:#2e2e2e;"><span class="mm">15.17</span></div>
<div class="t" style="left:1183.50px;top:314.40px;font-size:19.6px;letter-spacing:0.046px;font-weight:bold;"><span class="m">2022</span> Actuals, <span class="m">2021</span> Actuals by Category, Sub Category,</div>
<div class="t" style="left:1183.50px;top:342.10px;font-size:19.6px;letter-spacing:-0.065px;font-weight:bold;">Region, Sub Region, Quarter</div>
<div class="t" style="left:1183.60px;top:367.00px;font-size:20.2px;letter-spacing:-0.250px;">Jan <span class="m">30,2023</span></div>
<div class="t" style="left:1184.30px;top:427.80px;font-size:23px;letter-spacing:0.715px;">Water</div>
<div class="t" style="left:1931.40px;top:333.80px;font-size:26.6px;letter-spacing:-1.013px;font-weight:bold;color:#2b2b2b;"><span class="m">2022</span> Actuals</div>
<div class="t" style="left:1887.90px;top:383.80px;font-size:62px;letter-spacing:-3.595px;font-weight:bold;color:#333;"><span class="mm">264.28m</span></div>
<div class="t" style="left:1207.50px;top:521.80px;font-size:21px;letter-spacing:-0.465px;font-weight:bold;color:#111;">Quarter</div>
<div class="t" style="left:1645.70px;top:522.70px;font-size:21px;letter-spacing:-1.056px;font-weight:bold;color:#111;">Q<span class="m">1</span></div>
<div class="t" style="left:1934.40px;top:522.70px;font-size:21px;letter-spacing:-0.756px;font-weight:bold;color:#111;">Q<span class="m">2</span></div>
<div class="t" style="left:1220.70px;top:590.00px;font-size:21px;letter-spacing:-0.317px;">Region</div>
<div class="t" style="left:1438.00px;top:590.00px;font-size:21px;letter-spacing:-0.530px;">Sub Region</div>
<div class="t" style="left:1649.70px;top:579.50px;font-size:21px;letter-spacing:0.013px;"><span class="m">2022</span> Actuals</div>
<div class="t" style="left:1690.40px;top:607.50px;font-size:17.6px;letter-spacing:0.305px;">in Millions</div>
<div class="t" style="left:1793.90px;top:579.50px;font-size:21px;letter-spacing:0.013px;"><span class="m">2021</span> Actuals</div>
<div class="t" style="left:1834.60px;top:607.50px;font-size:17.6px;letter-spacing:0.305px;">in Millions</div>
<div class="t" style="left:1938.10px;top:579.50px;font-size:21px;letter-spacing:0.013px;"><span class="m">2022</span> Actuals</div>
<div class="t" style="left:1978.80px;top:607.50px;font-size:17.6px;letter-spacing:0.305px;">in Millions</div>
<div class="t" style="left:2082.30px;top:579.50px;font-size:21px;letter-spacing:0.012px;"><span class="m">2021</span> Actuals</div>
<div class="t" style="left:2123.00px;top:607.50px;font-size:17.6px;letter-spacing:0.305px;">in Millions</div>
<div class="t" style="left:1222.10px;top:655.30px;font-size:21px;letter-spacing:0.010px;">United States</div>
<div class="t" style="left:1437.30px;top:656.30px;font-size:20.2px;letter-spacing:-0.699px;">East</div>
<div class="t" style="left:1708.70px;top:656.30px;font-size:20.6px;letter-spacing:-0.700px;color:#2e2e2e;"><span class="mm">16.34</span></div>
<div class="t" style="left:1853.90px;top:656.30px;font-size:20.6px;letter-spacing:-0.700px;color:#2e2e2e;"><span class="mm">14.95</span></div>
<div class="t" style="left:1997.10px;top:656.30px;font-size:20.6px;letter-spacing:-0.700px;color:#2e2e2e;"><span class="mm">18.68</span></div>
<div class="t" style="left:2141.30px;top:656.30px;font-size:20.6px;letter-spacing:-0.700px;color:#2e2e2e;"><span class="mm">16.84</span></div>
<div class="t" style="left:1222.10px;top:694.90px;font-size:21px;letter-spacing:0.010px;">United States</div>
<div class="t" style="left:1437.30px;top:694.90px;font-size:21px;letter-spacing:-0.077px;">Pacific</div>
<div class="t" style="left:1708.70px;top:695.90px;font-size:20.6px;letter-spacing:-0.700px;color:#2e2e2e;"><span class="mm">12.26</span></div>
<div class="t" style="left:1853.90px;top:695.90px;font-size:20.6px;letter-spacing:-0.700px;color:#2e2e2e;"><span class="mm">10.02</span></div>
<div class="t" style="left:1998.10px;top:695.90px;font-size:20.6px;letter-spacing:-0.700px;color:#2e2e2e;"><span class="mm">13.95</span></div>
<div class="t" style="left:2141.30px;top:695.90px;font-size:20.6px;letter-spacing:-0.700px;color:#2e2e2e;"><span class="mm">11.26</span></div>
<div class="t" style="left:1222.10px;top:734.50px;font-size:21px;letter-spacing:0.010px;">United States</div>
<div class="t" style="left:1437.30px;top:734.50px;font-size:21px;letter-spacing:0.210px;">Central</div>
<div class="t" style="left:1721.39px;top:735.50px;font-size:20.6px;letter-spacing:-0.700px;color:#2e2e2e;"><span class="mm">5.99</span></div>
<div class="t" style="left:1865.59px;top:735.50px;font-size:20.6px;letter-spacing:-0.700px;color:#2e2e2e;"><span class="mm">4.69</span></div>
<div class="t" style="left:2008.79px;top:735.50px;font-size:20.6px;letter-spacing:-0.700px;color:#2e2e2e;"><span class="mm">7.70</span></div>
<div class="t" style="left:2153.99px;top:735.50px;font-size:20.6px;letter-spacing:-0.700px;color:#2e2e2e;"><span class="mm">8.42</span></div>
<div class="t" style="left:1222.10px;top:774.10px;font-size:21px;letter-spacing:0.010px;">United States</div>
<div class="t" style="left:1437.30px;top:774.10px;font-size:21px;letter-spacing:0.384px;">Midwest</div>
<div class="t" style="left:1720.39px;top:775.10px;font-size:20.6px;letter-spacing:-0.700px;color:#2e2e2e;"><span class="mm">5.60</span></div>
<div class="t" style="left:1864.59px;top:775.10px;font-size:20.6px;letter-spacing:-0.700px;color:#2e2e2e;"><span class="mm">4.98</span></div>
<div class="t" style="left:2009.79px;top:775.10px;font-size:20.6px;letter-spacing:-0.700px;color:#2e2e2e;"><span class="mm">6.87</span></div>
<div class="t" style="left:2153.99px;top:775.10px;font-size:20.6px;letter-spacing:-0.700px;color:#2e2e2e;"><span class="mm">5.75</span></div>
<div class="t" style="left:1222.10px;top:813.70px;font-size:21px;letter-spacing:0.548px;">International</div>
<div class="t" style="left:1437.30px;top:815.70px;font-size:19.8px;letter-spacing:-0.456px;">EMEA</div>
<div class="t" style="left:1708.70px;top:814.70px;font-size:20.6px;letter-spacing:-0.700px;color:#2e2e2e;"><span class="mm">15.20</span></div>
<div class="t" style="left:1853.90px;top:814.70px;font-size:20.6px;letter-spacing:-0.700px;color:#2e2e2e;"><span class="mm">13.55</span></div>
<div class="t" style="left:1997.10px;top:814.70px;font-size:20.6px;letter-spacing:-0.700px;color:#2e2e2e;"><span class="mm">16.00</span></div>
<div class="t" style="left:2141.30px;top:814.70px;font-size:20.6px;letter-spacing:-0.700px;color:#2e2e2e;"><span class="mm">16.70</span></div>
<div class="t" style="left:1222.10px;top:853.30px;font-size:21px;letter-spacing:0.548px;">International</div>
<div class="t" style="left:1438.30px;top:855.30px;font-size:19.6px;letter-spacing:-0.752px;">APAC</div>
<div class="t" style="left:1720.39px;top:854.30px;font-size:20.6px;letter-spacing:-0.700px;color:#2e2e2e;"><span class="mm">7.94</span></div>
<div class="t" style="left:1864.59px;top:854.30px;font-size:20.6px;letter-spacing:-0.700px;color:#2e2e2e;"><span class="mm">6.66</span></div>
<div class="t" style="left:2009.79px;top:854.30px;font-size:20.6px;letter-spacing:-0.700px;color:#2e2e2e;"><span class="mm">9.95</span></div>
<div class="t" style="left:2152.99px;top:854.30px;font-size:20.6px;letter-spacing:-0.700px;color:#2e2e2e;"><span class="mm">7.74</span></div>
<div style="left:443.7px;top:167.5px;width:183.5px;height:173.4px;background:#fff;border-radius:3px;box-shadow:0 6px 13px rgba(0,0,0,.2),0 0 3px rgba(0,0,0,.16);"></div>
<svg style="left:587px;top:243px" width="24" height="19" viewBox="0 0 24 19"><path d="M1.5 10.5L7.8 16.6L21.3 2.3" fill="none" stroke="#3b3a39" stroke-width="1.5"/></svg>
<div class="t" style="left:458.80px;top:184.40px;font-size:21px;letter-spacing:-0.060px;">Category</div>
<div class="t" style="left:459.80px;top:242.20px;font-size:21px;letter-spacing:-0.393px;">Sub Category</div>
<div class="t" style="left:459.00px;top:300.20px;font-size:21px;letter-spacing:-0.457px;">Region</div>
</body>
</html>
